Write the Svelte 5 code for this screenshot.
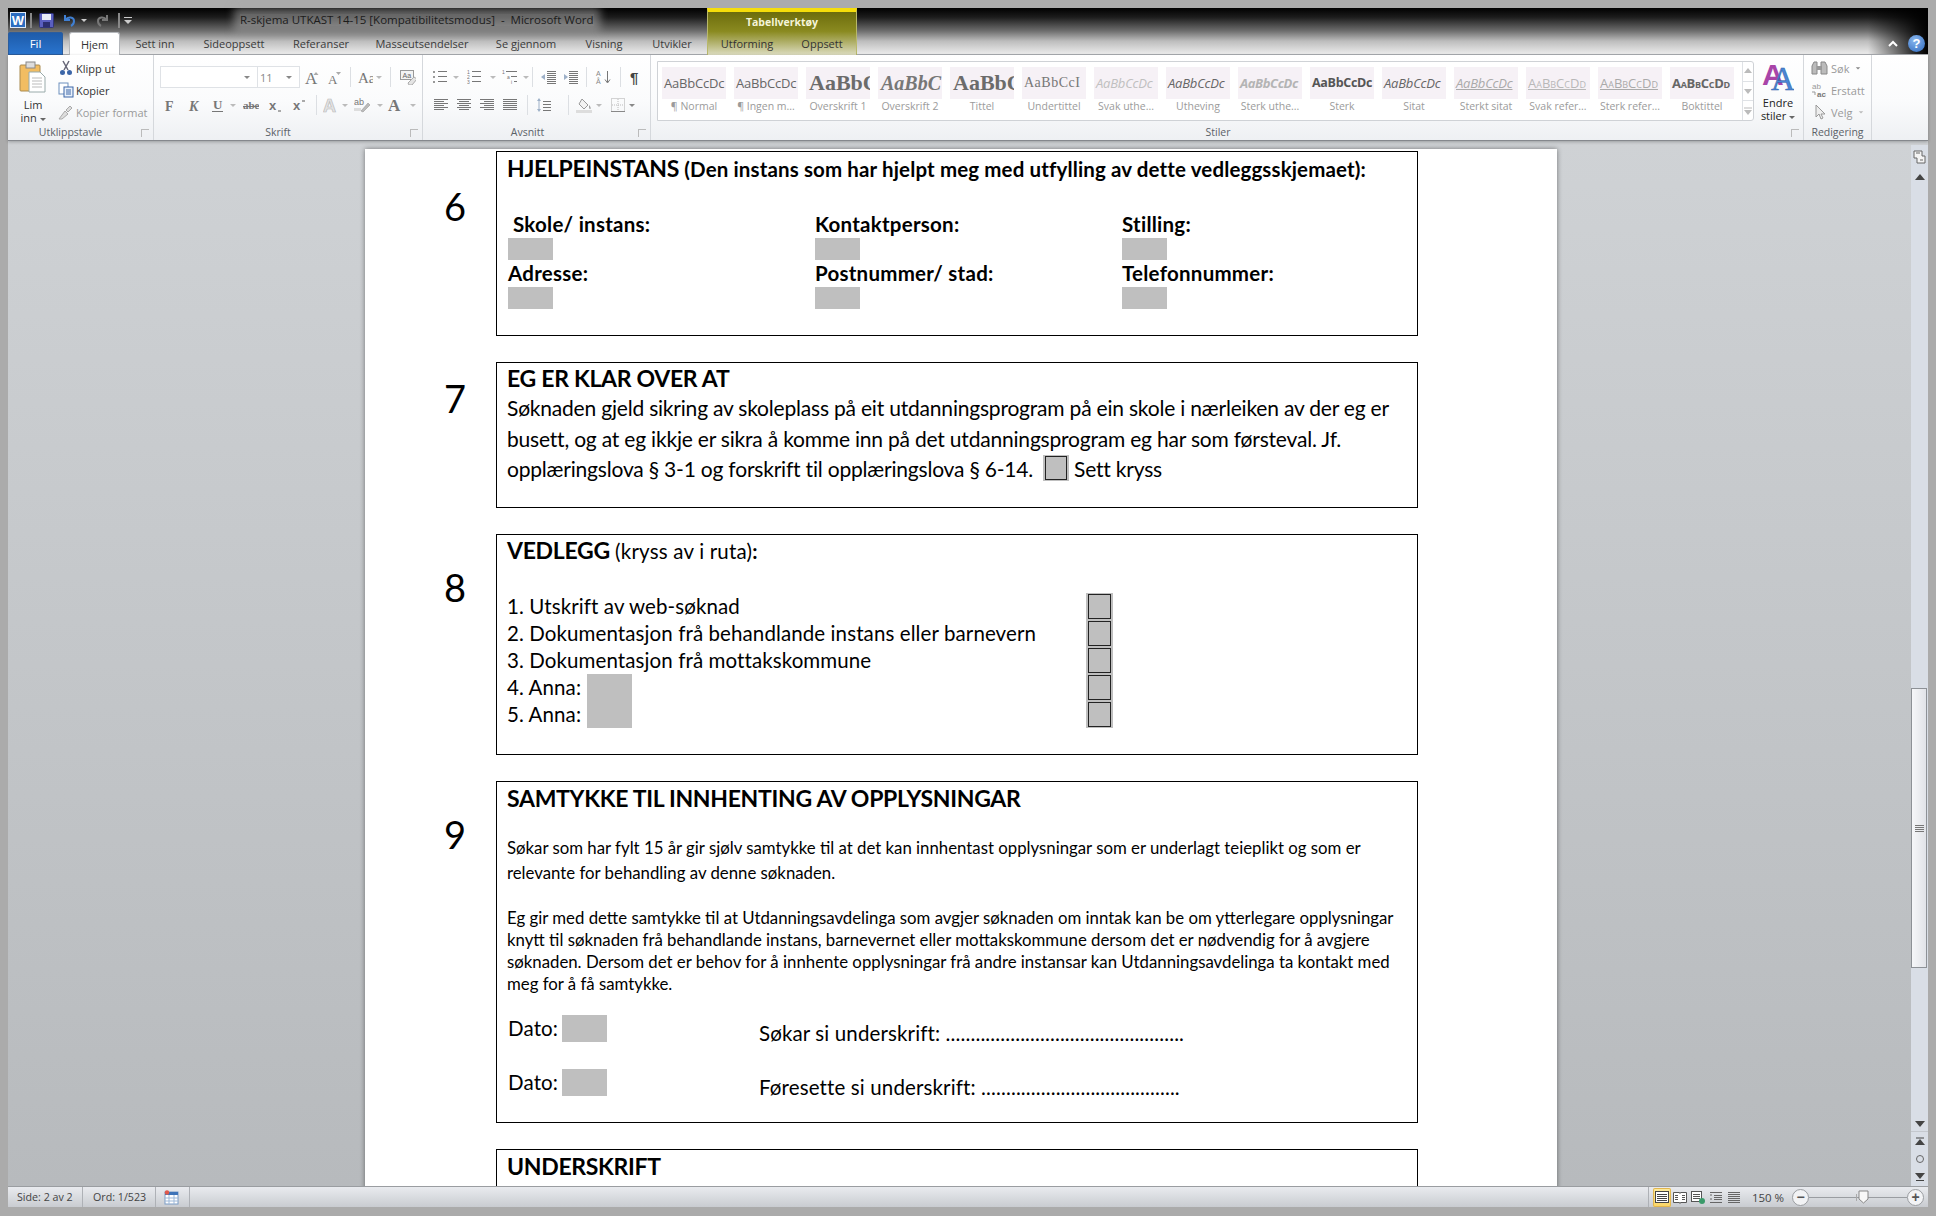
<script>
  // Word 2010 window with a form document, ribbon gallery and status bar
  const lines = (ys, x1, x2, c = '#777') =>
    ys.map((y) => `<path d="M${x1} ${y}.5H${x2}" stroke="${c}"/>`).join('');

  const icons = {
    caret: `<path d="M5 7h6l-3 3z" fill="#888"/>`,
    caretLight: `<path d="M5 7h6l-3 3z" fill="#bbb"/>`,
    grow: `<text x="1" y="15" font-family="Liberation Serif" font-size="17" fill="#777">A</text><path d="M12 3l2.5 3h-5z" fill="#aaa"/>`,
    shrink: `<text x="2" y="15" font-family="Liberation Serif" font-size="13" fill="#777">A</text><path d="M10 3h5l-2.5 3z" fill="#aaa"/>`,
    case: `<text x="1" y="14" font-family="Liberation Serif" font-size="15" fill="#777">Aa</text>`,
    clear: `<rect x="0.5" y="1.5" width="13" height="9" fill="#f3f3f3" stroke="#999"/><text x="2.5" y="9" font-family="Liberation Sans" font-size="7" fill="#666">Aa</text><path d="M8 14l6-6 3 2-5 6h-3z" fill="#e4e4e4" stroke="#aaa"/>`,
    bold: `<text x="3" y="14" font-family="Liberation Serif" font-weight="700" font-size="14" fill="#777">F</text>`,
    italic: `<text x="3" y="14" font-family="Liberation Serif" font-style="italic" font-weight="700" font-size="14" fill="#777">K</text>`,
    under: `<text x="3" y="12" font-family="Liberation Serif" font-weight="700" font-size="13" fill="#777">U</text><path d="M2 14.5h11" stroke="#777"/>`,
    strike: `<text x="0" y="12" font-family="Liberation Serif" font-weight="700" font-size="11" fill="#777">abe</text><path d="M0 9.5h18" stroke="#777"/>`,
    sub: `<text x="1" y="13" font-family="Liberation Sans" font-weight="700" font-size="13" fill="#777">x</text><path d="M10 13h3v2h-3z" fill="#aaa"/>`,
    sup: `<text x="1" y="13" font-family="Liberation Sans" font-weight="700" font-size="13" fill="#777">x</text><path d="M10 3h3v2h-3z" fill="#aaa"/>`,
    effect: `<text x="0" y="15" font-family="Liberation Sans" font-weight="700" font-size="18" fill="#e4e4e4" stroke="#bbb" stroke-width=".7">A</text>`,
    mark: `<text x="0" y="8" font-family="Liberation Sans" font-size="9" fill="#777">ab</text><path d="M7 14l7-8 2 2-7 7z" fill="#bbb" stroke="#999" stroke-width=".6"/><path d="M0 11h7v3H0z" fill="#ddd"/>`,
    colorA: `<text x="1" y="14" font-family="Liberation Serif" font-weight="700" font-size="17" fill="#777">A</text>`,
    bullets: `<g fill="#999"><rect x="1" y="2" width="2" height="2"/><rect x="1" y="7" width="2" height="2"/><rect x="1" y="12" width="2" height="2"/></g>${lines([2, 7, 12], 6, 15)}`,
    numbers: `<g font-family="Liberation Sans" font-size="5" fill="#777"><text x="0" y="5">1</text><text x="0" y="10">2</text><text x="0" y="15">3</text></g>${lines([2, 7, 12], 5, 14)}`,
    multi: `<g font-family="Liberation Sans" font-size="5" fill="#777"><text x="0" y="5">1</text><text x="5" y="10">a</text><text x="9" y="15">i</text></g>${lines([2], 4, 15)}${lines([7], 9, 15)}${lines([12], 12, 15)}`,
    outdent: `${lines([2, 4, 6, 8, 10, 12, 14], 6, 15)}<path d="M0 8l4-3v6z" fill="#9db0c8"/>`,
    indent: `${lines([2, 4, 6, 8, 10, 12, 14], 6, 15)}<path d="M5 8L1 5v6z" fill="#9db0c8"/>`,
    sort: `<g font-family="Liberation Sans" font-size="7" fill="#888"><text x="1" y="7">A</text><text x="1" y="15">Å</text></g><path d="M12.5 2v11M10 10.5l2.5 3.5 2.5-3.5" fill="none" stroke="#777"/>`,
    pilcrow: `<text x="2" y="14" font-family="Liberation Sans" font-weight="700" font-size="15" fill="#444">¶</text>`,
    left: lines([2, 6, 10], 1, 15) + lines([4, 8, 12], 1, 11),
    center: lines([2, 6, 10], 1, 15) + lines([4, 8, 12], 3, 13),
    right: lines([2, 6, 10], 1, 15) + lines([4, 8, 12], 5, 15),
    justify: lines([2, 4, 6, 8, 10, 12], 1, 15),
    spacing: `<path d="M3 1l-2 3h4zM3 15l-2-3h4z" fill="#9db0c8"/><path d="M3 4v8" stroke="#9db0c8"/>${lines([4, 7, 10, 13], 7, 15)}`,
    fill: `<path d="M6 2l6 6-4 4-5-5z" fill="#f2f2f2" stroke="#999"/><path d="M13 8c2 2 2 4 1 4s-1-2-1-4z" fill="#999"/><rect x="0" y="13" width="16" height="3" fill="#ddd"/>`,
    borders: `<rect x="1.5" y="1.5" width="13" height="13" fill="none" stroke="#aaa" stroke-dasharray="1 1"/><path d="M8 2v12M2 8h12" stroke="#bbb" stroke-dasharray="1 1"/><path d="M1 14.5h14" stroke="#888"/>`
  };

  const fontRow1 = [
    { i: 'grow', w: 23 }, { i: 'shrink', w: 22 }, { sep: 1, w: 10 },
    { i: 'case', w: 20 }, { i: 'caretLight', w: 8 }, { sep: 1, w: 14 }, { i: 'clear', w: 22 }
  ];
  const fontRow2 = [
    { i: 'bold', w: 20 }, { i: 'italic', w: 28 }, { i: 'under', w: 20 }, { i: 'caretLight', w: 10 },
    { i: 'strike', w: 26 }, { i: 'sub', w: 24 }, { i: 'sup', w: 24 }, { sep: 1, w: 8 },
    { i: 'effect', w: 22 }, { i: 'caretLight', w: 6 }, { i: 'mark', w: 28 }, { i: 'caretLight', w: 8 },
    { i: 'colorA', w: 22 }, { i: 'caretLight', w: 14 }
  ];
  const paraRow1 = [
    { i: 'bullets', w: 22 }, { i: 'caretLight', w: 10 }, { i: 'numbers', w: 28 }, { i: 'caretLight', w: 8 },
    { i: 'multi', w: 26 }, { i: 'caretLight', w: 6 }, { sep: 1, w: 6 }, { i: 'outdent', w: 28 },
    { i: 'indent', w: 16 }, { sep: 1, w: 15 }, { i: 'sort', w: 18 }, { sep: 1, w: 16 }, { i: 'pilcrow', w: 16 }
  ];
  const paraRow2 = [
    { i: 'left', w: 23 }, { i: 'center', w: 23 }, { i: 'right', w: 23 }, { i: 'justify', w: 24 }, { sep: 1, w: 10 },
    { i: 'spacing', w: 24 }, { sep: 1, w: 24 }, { i: 'fill', w: 8 }, { i: 'caretLight', w: 22 },
    { i: 'borders', w: 16 }, { i: 'caret', w: 12 }
  ];

  const tabs = [
    ['Sett inn', 70], ['Sideoppsett', 88], ['Referanser', 86], ['Masseutsendelser', 116],
    ['Se gjennom', 92], ['Visning', 64], ['Utvikler', 72]
  ];

  const styles = [
    { sample: 'AaBbCcDc', label: '¶ Normal', cls: 's-normal' },
    { sample: 'AaBbCcDc', label: '¶ Ingen m...', cls: 's-normal' },
    { sample: 'AaBbC', label: 'Overskrift 1', cls: 's-h1' },
    { sample: 'AaBbC', label: 'Overskrift 2', cls: 's-h2' },
    { sample: 'AaBbC', label: 'Tittel', cls: 's-h1' },
    { sample: 'AaBbCcI', label: 'Undertittel', cls: 's-sub' },
    { sample: 'AaBbCcDc', label: 'Svak uthe...', cls: 's-faint' },
    { sample: 'AaBbCcDc', label: 'Utheving', cls: 's-em' },
    { sample: 'AaBbCcDc', label: 'Sterk uthe...', cls: 's-faintb' },
    { sample: 'AaBbCcDc', label: 'Sterk', cls: 's-strong' },
    { sample: 'AaBbCcDc', label: 'Sitat', cls: 's-em' },
    { sample: 'AaBbCcDc', label: 'Sterkt sitat', cls: 's-quote' },
    { sample: 'AaBbCcDd', label: 'Svak refer...', cls: 's-ref' },
    { sample: 'AaBbCcDd', label: 'Sterk refer...', cls: 's-refb' },
    { sample: 'AaBbCcDd', label: 'Boktittel', cls: 's-book' }
  ];

  const fields = [
    [' Skole/ instans:', 'Kontaktperson:', 'Stilling:'],
    ['Adresse:', 'Postnummer/ stad:', 'Telefonnummer:']
  ];
  const attachments = [
    { text: '1. Utskrift av web-søknad' },
    { text: '2. Dokumentasjon frå behandlande instans eller barnevern' },
    { text: '3. Dokumentasjon frå mottakskommune' },
    { text: '4. Anna:', field: true },
    { text: '5. Anna:', field: true }
  ];
</script>

{#snippet toolRow(items)}
  <div class="tools">
    {#each items as t}
      <span class="cell" style="width:{t.w}px">
        {#if t.sep}
          <span class="vsep"></span>
        {:else}
          <svg width="16" height="16" viewBox="0 0 16 16">{@html icons[t.i]}</svg>
        {/if}
      </span>
    {/each}
  </div>
{/snippet}

<div class="window">
  <header class="head">
    <div class="titlebar">
      <div class="qat">
        <svg width="16" height="16" viewBox="0 0 16 16"><rect x=".5" y=".5" width="15" height="15" fill="#2b6cc0" stroke="#dfe9f6"/><text x="8" y="13" text-anchor="middle" font-family="Liberation Sans" font-weight="700" font-size="13" fill="#fff">W</text></svg>
        <span class="qsep"></span>
        <svg class="save" width="15" height="15" viewBox="0 0 15 15"><rect x=".5" y=".5" width="14" height="14" rx="1" fill="#5a5fc0" stroke="#30357a"/><rect x="3" y="1" width="9" height="6" fill="#e8ecf5"/><rect x="4" y="9" width="7" height="5" fill="#2c2f70"/></svg>
        <svg class="undo" width="14" height="14" viewBox="0 0 14 14"><path d="M3 2v5h5M3.500 7C6 3 12 4 12 8c0 2-1 4-3 5" fill="none" stroke="#3f7fd2" stroke-width="2"/></svg>
        <svg class="mini" width="8" height="8" viewBox="0 0 8 8"><path d="M1 3h6L4 6z" fill="#ccc"/></svg>
        <svg class="redo" width="14" height="14" viewBox="0 0 14 14"><path d="M11 2v5H6M10.500 7C8 3 2 4 2 8c0 2 1 4 3 5" fill="none" stroke="#777" stroke-width="2"/></svg>
        <span class="qsep q2"></span>
        <svg class="custom" width="8" height="10" viewBox="0 0 8 10"><path d="M0 2.500h8" stroke="#ccc"/><path d="M0 5h8L4 9z" fill="#ccc"/></svg>
      </div>
      <span class="doc-title">R-skjema UTKAST 14-15 [Kompatibilitetsmodus]  -  Microsoft Word</span>
      <div class="context">Tabellverktøy</div>
    </div>
    <nav class="tabs">
      <span class="tab-file">Fil</span>
      <span class="tab-home">Hjem</span>
      {#each tabs as [name, w]}
        <span class="tab" style="width:{w}px">{name}</span>
      {/each}
      <div class="ctx-tabs"><span>Utforming</span><span>Oppsett</span></div>
      <span class="grow"></span>
      <svg class="collapse" width="12" height="10" viewBox="0 0 12 10"><path d="M2 7l4-4 4 4" fill="none" stroke="#fff" stroke-width="2"/></svg>
      <span class="help">?</span>
    </nav>
  </header>

  <section class="ribbon">
    <div class="group g-clip">
      <div class="gbody clip-body">
        <div class="paste">
          <svg width="28" height="32" viewBox="0 0 28 32"><rect x="1" y="4" width="20" height="26" rx="1" fill="#f2bd62" stroke="#a98a4e"/><rect x="7" y="1" width="9" height="6" fill="#ddd" stroke="#888"/><path d="M10 11h11l5 5v15H10z" fill="#fff" stroke="#9aa"/><path d="M13 17h10M13 20h10M13 23h10M13 26h10" stroke="#bbb"/></svg>
          <span>Lim</span>
          <span>inn <i class="tri"></i></span>
        </div>
        <div class="clip-list">
          <span class="clip-item">
            <svg width="14" height="16" viewBox="0 0 14 16"><path d="M4 1l5 9M10 1L5 10" stroke="#667" stroke-width="1.500"/><circle cx="3.500" cy="12.500" r="2.500" fill="#3c66a8"/><circle cx="10.500" cy="12.500" r="2.500" fill="#3c66a8"/></svg>
            Klipp ut
          </span>
          <span class="clip-item">
            <svg width="16" height="16" viewBox="0 0 16 16"><rect x="1" y="1" width="9" height="11" fill="#fff" stroke="#6d8fbd"/><rect x="6" y="5" width="9" height="10" fill="#e8f0fa" stroke="#3c66a8"/><path d="M8 8h5M8 10h5M8 12h5" stroke="#3c66a8"/></svg>
            Kopier
          </span>
          <span class="clip-item off">
            <svg width="16" height="16" viewBox="0 0 16 16"><path d="M1 15l6-8 3 3-6 5zM8 6l4-4 2 2-4 4z" fill="#ddd" stroke="#aaa"/></svg>
            Kopier format
          </span>
        </div>
      </div>
      <div class="glabel pad20">Utklippstavle<i class="launch"></i></div>
    </div>

    <div class="group g-font">
      <div class="gbody stack">
        <div class="tools">
          <span class="combo fontname"><svg width="16" height="16" viewBox="0 0 16 16">{@html icons.caret}</svg></span>
          <span class="combo fontsize">11<svg width="16" height="16" viewBox="0 0 16 16">{@html icons.caret}</svg></span>
          {@render toolRow(fontRow1)}
        </div>
        {@render toolRow(fontRow2)}
      </div>
      <div class="glabel pad20">Skrift<i class="launch"></i></div>
    </div>

    <div class="group g-para">
      <div class="gbody stack">
        {@render toolRow(paraRow1)}
        {@render toolRow(paraRow2)}
      </div>
      <div class="glabel pad18">Avsnitt<i class="launch"></i></div>
    </div>

    <div class="group g-styles">
      <div class="gbody styles-body">
        <div class="gallery">
          <div class="thumbs">
            {#each styles as s}
              <div class="style">
                <div class="sample {s.cls}">{s.sample}</div>
                <div class="slabel">{s.label}</div>
              </div>
            {/each}
          </div>
          <div class="gscroll">
            <span><svg width="8" height="6" viewBox="0 0 8 6"><path d="M0 5h8L4 0z" fill="#bbb"/></svg></span>
            <span><svg width="8" height="6" viewBox="0 0 8 6"><path d="M0 1h8L4 6z" fill="#bbb"/></svg></span>
            <span><svg width="8" height="8" viewBox="0 0 8 8"><path d="M0 1h8" stroke="#bbb"/><path d="M0 3h8L4 8z" fill="#bbb"/></svg></span>
          </div>
        </div>
        <div class="change">
          <svg width="32" height="30" viewBox="0 0 32 30"><text x="0" y="24" font-family="Liberation Sans" font-weight="700" font-size="30" fill="#a844a8">A</text><text x="9" y="29" font-family="Liberation Serif" font-size="33" fill="#4a86d4" stroke="#2f62a8" stroke-width=".5">A</text></svg>
          <span>Endre</span>
          <span>stiler <i class="tri"></i></span>
        </div>
      </div>
      <div class="glabel pad18">Stiler<i class="launch"></i></div>
    </div>

    <div class="group g-edit">
      <div class="gbody edit-list">
        <span class="edit-item">
          <svg width="17" height="14" viewBox="0 0 17 14"><path d="M1 13V5l2-4h3v12zM10 13V1h4l2 4v8z" fill="#bbb" stroke="#888"/><path d="M6 5h5v4H6z" fill="#999"/></svg>
          Søk <svg width="12" height="12" viewBox="0 0 16 16">{@html icons.caret}</svg>
        </span>
        <span class="edit-item">
          <svg width="17" height="16" viewBox="0 0 17 16"><text x="1" y="7" font-family="Liberation Sans" font-size="8" fill="#999">ab</text><text x="6" y="15" font-family="Liberation Sans" font-weight="700" font-size="8" fill="#777">ac</text><path d="M1 10h3v3" fill="none" stroke="#999"/></svg>
          Erstatt
        </span>
        <span class="edit-item">
          <svg width="17" height="16" viewBox="0 0 17 16"><path d="M5 1v12l3-3 2 5 2-1-2-4h4z" fill="#eee" stroke="#999"/></svg>
          Velg <svg width="12" height="12" viewBox="0 0 16 16">{@html icons.caretLight}</svg>
        </span>
      </div>
      <div class="glabel">Redigering</div>
    </div>
  </section>

  <main class="workspace">
    <div class="canvas">
      <article class="page">
        <div class="sect">
          <div class="num n6">6</div>
          <div class="box b1">
            <div class="title t32">HJELPEINSTANS <span class="title-sub">(Den instans som har hjelpt meg med utfylling av dette vedleggsskjemaet):</span></div>
            <div class="field-grid">
              {#each fields as row}
                {#each row as label}
                  <div class="field-cell">
                    <div class="flabel" class:indent={label.startsWith(' ')}>{label.trim()}</div>
                    <div class="ff"></div>
                  </div>
                {/each}
              {/each}
            </div>
          </div>
        </div>

        <div class="sect">
          <div class="num n7">7</div>
          <div class="box b2">
            <div class="title t30">EG ER KLAR OVER AT</div>
            <div class="body-text">
              <div>Søknaden gjeld sikring av skoleplass på eit utdanningsprogram på ein skole i nærleiken av der eg er</div>
              <div>busett, og at eg ikkje er sikra å komme inn på det utdanningsprogram eg har som førsteval. Jf.</div>
              <div class="with-check">opplæringslova § 3-1 og forskrift til opplæringslova § 6-14.<span class="check big"><i></i></span>Sett kryss</div>
            </div>
          </div>
        </div>

        <div class="sect">
          <div class="num n8">8</div>
          <div class="box b3">
            <div class="title t30">VEDLEGG <span class="title-note">(kryss av i ruta)</span><span class="title-sub">:</span></div>
            <div class="attach">
              {#each attachments as a}
                <div class="attach-row">
                  <div class="attach-text">
                    <span>{a.text}</span>
                    {#if a.field}<span class="ff anna"></span>{/if}
                  </div>
                  <span class="check"><i></i></span>
                </div>
              {/each}
            </div>
          </div>
        </div>

        <div class="sect">
          <div class="num n9">9</div>
          <div class="box b4">
            <div class="title t32">SAMTYKKE TIL INNHENTING AV OPPLYSNINGAR</div>
            <div class="small p1">
              <div>Søkar som har fylt 15 år gir sjølv samtykke til at det kan innhentast opplysningar som er underlagt teieplikt og som er</div>
              <div>relevante for behandling av denne søknaden.</div>
            </div>
            <div class="small p2">
              <div>Eg gir med dette samtykke til at Utdanningsavdelinga som avgjer søknaden om inntak kan be om ytterlegare opplysningar</div>
              <div>knytt til søknaden frå behandlande instans, barnevernet eller mottakskommune dersom det er nødvendig for å avgjere</div>
              <div>søknaden. Dersom det er behov for å innhente opplysningar frå andre instansar kan Utdanningsavdelinga ta kontakt med</div>
              <div>meg for å få samtykke.</div>
            </div>
            <div class="signs">
              <div class="sign-row">
                <div class="dato">Dato:<span class="ff"></span></div>
                <div class="signature">Søkar si underskrift: ................................................</div>
              </div>
              <div class="sign-row">
                <div class="dato">Dato:<span class="ff"></span></div>
                <div class="signature">Føresette si underskrift: ........................................</div>
              </div>
            </div>
          </div>
        </div>

        <div class="sect">
          <div></div>
          <div class="box b5"><div class="title t32">UNDERSKRIFT</div></div>
        </div>
      </article>
    </div>

    <aside class="vscroll">
      <span class="sb-ruler">
        <svg width="13" height="14" viewBox="0 0 13 14"><path d="M1 1h8v5h3v7H4V8H1z" fill="#f4f4f4" stroke="#666"/><path d="M3 3h4M7 10h3" stroke="#666"/></svg>
      </span>
      <span class="sb-btn top"><svg width="10" height="6" viewBox="0 0 10 6"><path d="M0 6h10L5 0z" fill="#444"/></svg></span>
      <span class="sb-track-a"></span>
      <span class="sb-thumb"><i></i><i></i><i></i><i></i></span>
      <span class="sb-track-b"></span>
      <span class="sb-btn down"><svg width="10" height="6" viewBox="0 0 10 6"><path d="M0 0h10L5 6z" fill="#444"/></svg></span>
      <span class="sb-btn"><svg width="10" height="10" viewBox="0 0 10 10"><path d="M1 2h8" stroke="#444"/><path d="M0 9h10L5 3z" fill="#444"/></svg></span>
      <span class="sb-btn"><svg width="10" height="10" viewBox="0 0 10 10"><circle cx="5" cy="5" r="3.500" fill="none" stroke="#666"/></svg></span>
      <span class="sb-btn"><svg width="10" height="10" viewBox="0 0 10 10"><path d="M0 1h10L5 7z" fill="#444"/><path d="M1 8.500h8" stroke="#444"/></svg></span>
    </aside>
  </main>

  <footer class="status">
    <span class="st st-page">Side: 2 av 2</span>
    <span class="st st-words">Ord: 1/523</span>
    <span class="st st-lang">
      <svg width="15" height="15" viewBox="0 0 15 15"><rect x="1" y="2" width="13" height="12" fill="#fff" stroke="#7a9cc6"/><rect x="1" y="2" width="13" height="3" fill="#3f74b8"/><path d="M1 8h13M1 11h13M5 5v9M10 5v9" stroke="#9db8d8"/><circle cx="3" cy="2.500" r="2.200" fill="#e2584a"/></svg>
    </span>
    <span class="grow"></span>
    <div class="views">
      <span class="view active"><svg width="14" height="14" viewBox="0 0 14 14"><rect x=".5" y="1.500" width="13" height="11" fill="#fff" stroke="#444"/>{@html lines([4, 6, 8, 10], 2, 12, '#444')}</svg></span>
      <span class="view"><svg width="14" height="14" viewBox="0 0 14 14"><path d="M.5 2.500h6l.5 1 .5-1h6v10h-6l-.5 1-.5-1h-6z" fill="#fff" stroke="#555"/>{@html lines([5, 7, 9], 2, 5, '#555')}{@html lines([5, 7, 9], 9, 12, '#555')}</svg></span>
      <span class="view"><svg width="14" height="14" viewBox="0 0 14 14"><rect x=".5" y="1.500" width="10" height="10" fill="#fff" stroke="#555"/>{@html lines([4, 6, 8], 2, 9, '#555')}<circle cx="11" cy="11" r="3" fill="#3a9a6a"/></svg></span>
      <span class="view"><svg width="14" height="14" viewBox="0 0 14 14">{@html lines([2, 12], 1, 13, '#666')}{@html lines([5, 7, 9], 5, 13, '#666')}<path d="M1 5h2M1 9h2" stroke="#666"/></svg></span>
      <span class="view"><svg width="14" height="14" viewBox="0 0 14 14">{@html lines([2, 4, 6, 8, 10, 12], 1, 13, '#666')}</svg></span>
    </div>
    <span class="zoomval">150 %</span>
    <div class="zoomer">
      <span class="zbtn">−</span>
      <span class="zline"><i class="ztick"></i><svg class="zthumb" width="11" height="14" viewBox="0 0 11 14"><path d="M1 1h9v8l-4.500 4L1 9z" fill="#f8f8f8" stroke="#888"/></svg></span>
      <span class="zbtn">+</span>
    </div>
  </footer>
</div>

<style>
  :global(body) { margin: 0; background: #ababab; }

  .window {
    width: 1936px; height: 1216px; box-sizing: border-box;
    padding: 8px 8px 9px; background: #ababab;
    display: flex; flex-direction: column; overflow: hidden;
    font-family: "Open Sans", "Liberation Sans", sans-serif; font-size: 11px; color: #333;
  }

  /* title bar + tabs */
  .head {
    height: 47px; flex: none; box-sizing: border-box;
    border-bottom: 1px solid #a9acb0;
    background:
      linear-gradient(to left, #000 0, rgba(0,0,0,.85) 12px, rgba(0,0,0,0) 60px),
      linear-gradient(to bottom, #000 0, #1c1c1c 20%, #6e6e6e 50%, #bdbdbd 72%, #ebebeb 100%);
  }
  .titlebar { height: 24px; display: flex; align-items: center; position: relative; }
  .qat { width: 232px; padding-left: 2px; height: 24px; display: flex; align-items: center; flex: none; box-sizing: border-box; }
  .qat svg { flex: none; }
  .qsep { width: 2px; height: 15px; margin: 0 6px 0 4px; background: #888; }
  .q2 { margin: 0 4px 0 8px; }
  .save { margin-left: 1px; }
  .undo { margin-left: 8px; }
  .mini { margin-left: 4px; }
  .redo { margin-left: 8px; }
  .doc-title {
    color: #1c1c1c; font-size: 11.5px; white-space: pre; line-height: 12px;
    background: rgba(170,170,170,.55); box-shadow: 0 0 9px 6px rgba(170,170,170,.55);
  }
  .context {
    position: absolute; left: 699px; top: 0; width: 150px; height: 47px; box-sizing: border-box;
    border-top: 4px solid #f5dd0a; border-left: 1px solid #b8b86a; border-right: 1px solid #b8b86a;
    background: linear-gradient(#6c6c0c, #8a8a20 45%, #dcdcc0 100%);
    color: #f4f4d8; font-weight: 700; font-size: 10.5px; text-align: center; line-height: 20px;
  }
  .tabs { height: 23px; display: flex; align-items: stretch; position: relative; }
  .tabs span { display: flex; align-items: center; justify-content: center; }
  .tab-file {
    width: 55px; flex: none; color: #fff; font-size: 11.5px; border-radius: 3px 3px 0 0;
    background: linear-gradient(#1d5aa8, #2a75cf); box-shadow: inset 0 0 0 1px #2b5d9e;
  }
  .tab-home {
    width: 51px; flex: none; margin-left: 6px; background: #fff;
    border: 1px solid #b4b7bb; border-bottom: none; border-radius: 3px 3px 0 0; box-sizing: border-box;
    margin-bottom: -1px; z-index: 1;
  }
  .tab { flex: none; color: #3a3a3a; }
  .ctx-tabs { position: absolute; left: 699px; top: 0; width: 150px; height: 23px; display: flex; z-index: 1; }
  .ctx-tabs span { flex: none; color: #333; }
  .ctx-tabs span:first-child { width: 80px; }
  .ctx-tabs span:last-child { width: 70px; }
  .grow { flex: 1; }
  .collapse { align-self: center; margin-right: 9px; }
  .help {
    width: 17px; height: 17px; border-radius: 50%; align-self: center; margin-right: 3px;
    background: radial-gradient(circle at 40% 30%, #8ab8f0, #2d68bd);
    color: #fff; font: 700 13px "Liberation Sans", sans-serif;
  }

  /* ribbon */
  .ribbon {
    height: 86px; flex: none; display: flex; box-sizing: border-box;
    background: linear-gradient(#fff, #fafbfc 55%, #eef0f3);
    border-bottom: 1px solid #85888d; box-shadow: 0 1px 3px rgba(0,0,0,.25);
    position: relative; z-index: 2;
  }
  .group { display: flex; flex-direction: column; border-right: 1px solid #d5d8dc; box-sizing: border-box; flex: none; }
  .gbody { height: 70px; flex: none; box-sizing: border-box; }
  .glabel { height: 15px; font-size: 10.5px; color: #5b6168; text-align: center; line-height: 15px; position: relative; }
  .pad20 { padding-right: 20px; }
  .pad18 { padding-right: 18px; }
  .launch {
    position: absolute; right: 4px; top: 4px; width: 7px; height: 7px;
    border: 1px solid #bbb; border-width: 1px 0 0 1px;
  }
  .g-clip { width: 146px; }
  .g-font { width: 269px; }
  .g-para { width: 228px; }
  .g-styles { width: 1153px; }
  .g-edit { width: 68px; }

  .clip-body { display: flex; padding: 6px 0 0 7px; }
  .paste { width: 36px; display: flex; flex-direction: column; align-items: center; line-height: 13px; font-size: 11px; }
  .paste svg { margin-bottom: 5px; }
  .tri { display: inline-block; border: 3px solid transparent; border-top: 3px solid #666; border-bottom: none; vertical-align: middle; }
  .clip-list { margin-left: 7px; margin-top: -1px; display: flex; flex-direction: column; gap: 6px; }
  .clip-item { height: 16px; display: flex; align-items: center; gap: 2px; white-space: nowrap; }
  .clip-item svg { width: 16px; flex: none; }
  .off { color: #9a9a9a; }

  .stack { padding: 11px 0 0 6px; display: flex; flex-direction: column; gap: 6px; }
  .tools { display: flex; height: 22px; align-items: stretch; flex: none; }
  .cell { display: flex; align-items: center; justify-content: center; flex: none; }
  .cell svg { flex: none; }
  .vsep { width: 1px; height: 20px; background: #dcdfe3; }
  .combo {
    box-sizing: border-box; height: 22px; background: #fff; border: 1px solid #dfe2e6; color: #888;
    display: flex; align-items: center; justify-content: flex-end; padding-right: 2px; flex: none; font-size: 11px;
  }
  .fontname { width: 98px; }
  .fontsize { width: 43px; margin-left: -1px; justify-content: space-between; padding-left: 2px; }

  .styles-body { display: flex; padding: 6px 0 0 6px; align-items: flex-start; }
  .gallery { width: 1097px; height: 60px; box-sizing: border-box; border: 1px solid #cfd2d6; background: #fff; display: flex; border-radius: 0 3px 3px 0; }
  .thumbs { width: 1084px; display: flex; gap: 8px; padding: 5px 0 0 4px; box-sizing: border-box; flex: none; }
  .style { width: 64px; flex: none; }
  .sample {
    height: 32px; background: #f6f1f6; line-height: 32px; overflow: hidden; white-space: nowrap;
    padding-left: 2px; box-sizing: border-box; color: #666; font-size: 13px;
  }
  .slabel { text-align: center; color: #9b9b9b; font-size: 10.5px; line-height: 14px; white-space: nowrap; }
  .s-normal { font-family: "Open Sans", sans-serif; letter-spacing: -.2px; }
  .s-h1 { font: 700 22px/32px "Liberation Serif", serif; padding-left: 3px; color: #6b6b6b; }
  .s-h2 { font: italic 700 20px/32px "Liberation Serif", serif; padding-left: 3px; color: #777; }
  .s-sub { font: 14px/32px "Liberation Serif", serif; color: #777; letter-spacing: .5px; }
  .s-faint { font-style: italic; color: #c0c0c0; letter-spacing: -.2px; }
  .s-em { font-style: italic; letter-spacing: -.2px; }
  .s-faintb { font-style: italic; font-weight: 700; color: #b4b4b4; letter-spacing: -.4px; }
  .s-strong { font-weight: 700; color: #555; font-size: 12.5px; letter-spacing: -.3px; }
  .s-quote { font-style: italic; color: #aaa; text-decoration: underline; letter-spacing: -.2px; }
  .s-ref { font-variant: small-caps; color: #b8b8b8; text-decoration: underline; }
  .s-refb { font-variant: small-caps; color: #aaa; text-decoration: underline; }
  .s-book { font-variant: small-caps; color: #666; font-weight: 700; letter-spacing: -.3px; }
  .gscroll { flex: 1; display: flex; flex-direction: column; border-left: 1px solid #dfe2e6; }
  .gscroll span { flex: 1; display: flex; align-items: center; justify-content: center; border-bottom: 1px solid #dfe2e6; }
  .gscroll span:last-child { border-bottom: none; }
  .change { width: 48px; margin-top: -1px; display: flex; flex-direction: column; align-items: center; line-height: 13px; color: #222; }
  .change svg { margin: 1px 0 5px; flex: none; }
  .edit-list { padding: 5px 0 0 7px; display: flex; flex-direction: column; gap: 6px; }
  .edit-item { height: 16px; display: flex; align-items: center; gap: 3px; color: #9a9a9a; white-space: nowrap; }

  /* document area */
  .workspace { flex: 1; min-height: 0; display: flex; background: linear-gradient(#cfd2d5, #b7babd); }
  .canvas { flex: 1; min-width: 0; overflow: hidden; padding: 8px 0 0 357px; box-sizing: border-box; }
  .page {
    width: 1192px; height: 1400px; background: #fff; box-shadow: 0 0 5px rgba(0,0,0,.45);
    padding-top: 2px; box-sizing: border-box;
    font-family: Lato, "Open Sans", sans-serif; color: #000;
    display: flex; flex-direction: column; gap: 26px;
  }
  .sect { display: grid; grid-template-columns: 131px 922px; }
  .num { font-size: 38px; line-height: 44px; padding-left: 79px; }
  .n6 { padding-top: 33px; }
  .n7 { padding-top: 14px; }
  .n8 { padding-top: 31px; }
  .n9 { padding-top: 31px; }
  .box { border: 1px solid #000; box-sizing: border-box; padding-left: 10px; }
  .b1 { height: 185px; }
  .b2 { height: 146px; }
  .b3 { height: 221px; }
  .b4 { height: 342px; }
  .b5 { height: 100px; }
  .title { font-weight: 700; font-size: 23px; letter-spacing: -.3px; white-space: nowrap; }
  .t30 { line-height: 30px; }
  .t32 { line-height: 32px; }
  .title-sub { font-size: 20.5px; letter-spacing: .13px; }
  .title-note { font-weight: 400; font-size: 20.5px; letter-spacing: .2px; }

  .field-grid { margin-top: 27px; padding-left: 1px; display: grid; grid-template-columns: repeat(3, 307px); row-gap: 1px; }
  .flabel { height: 26px; line-height: 24px; font-size: 20.5px; font-weight: 700; letter-spacing: .25px; white-space: nowrap; }
  .indent { padding-left: 5px; }
  .ff { display: block; width: 45px; height: 22px; background: #bfbfbf; flex: none; }

  .body-text { font-size: 21px; line-height: 30.5px; letter-spacing: -.2px; white-space: nowrap; }
  .check {
    width: 27px; height: 27px; background: #bfbfbf; box-sizing: border-box; padding: 1px 2px;
    display: inline-flex; flex: none;
  }
  .check i { flex: 1; border: 1px solid #222; }
  .big { vertical-align: -3px; margin: -6px 5px -6px 10px; width: 26px; height: 26px; }

  .attach { margin-top: 27px; }
  .attach-row { display: flex; height: 27px; }
  .attach-text { width: 579px; flex: none; display: flex; font-size: 20.5px; line-height: 27px; letter-spacing: .1px; white-space: nowrap; gap: 6px; }
  .anna { height: 27px; }

  .small { font-size: 16.8px; letter-spacing: 0; white-space: nowrap; }
  .p1 { margin-top: 21px; line-height: 25px; }
  .p2 { margin-top: 22px; line-height: 22px; }
  .signs { margin-top: 20px; display: flex; flex-direction: column; gap: 27px; }
  .sign-row { height: 27px; display: flex; font-size: 20.5px; line-height: 27px; letter-spacing: .13px; white-space: nowrap; }
  .dato { width: 252px; flex: none; display: flex; gap: 4px; padding-left: 1px; box-sizing: border-box; }
  .dato .ff { height: 27px; }
  .signature { padding-top: 5px; }

  /* scrollbar */
  .vscroll { width: 17px; flex: none; margin-top: 4px; display: flex; flex-direction: column; background: #d9dee6; }
  .vscroll span { display: flex; align-items: center; justify-content: center; flex: none; }
  .sb-ruler { height: 23px; }
  .sb-btn { height: 18px; }
  .sb-btn.down { height: 18px; padding-top: 3px; box-sizing: border-box; border-bottom: 1px solid #c4c8ce; }
  .sb-track-a { height: 502px; }
  .sb-track-b { flex: 1 !important; }
  .sb-thumb {
    height: 280px; box-sizing: border-box; width: 16px; border: 1px solid #8d9196;
    background: linear-gradient(to right, #f6f7f9, #e1e3e8);
    flex-direction: column; gap: 1px;
  }
  .sb-thumb i { width: 9px; height: 1px; background: #777; }

  /* status bar */
  .status {
    height: 21px; flex: none; display: flex; align-items: stretch; box-sizing: border-box;
    border-top: 1px solid #9a9da1; background: linear-gradient(#e9ebef, #c9ccd1);
    font-size: 10.7px; color: #444; position: relative;
  }
  .st { display: flex; align-items: center; border-right: 1px solid #aeb1b6; box-sizing: border-box; flex: none; }
  .st-page { width: 75px; padding-left: 9px; }
  .st-words { width: 73px; padding-left: 10px; }
  .st-lang { width: 34px; padding-left: 8px; }
  .views { display: flex; align-items: center; border-left: 1px solid #aeb1b6; padding-left: 4px; flex: none; }
  .view { width: 18px; height: 19px; display: flex; align-items: center; justify-content: center; }
  .active { background: linear-gradient(#fdeca0, #fbd564); box-shadow: inset 0 0 0 1px #e2b64e; border-radius: 2px; }
  .zoomval { width: 52px; text-align: center; align-self: center; font-size: 11.5px; flex: none; margin-left: -1px; margin-right: -2px; }
  .zoomer { display: flex; align-items: center; width: 132px; margin-right: 4px; flex: none; }
  .zbtn {
    width: 15px; height: 15px; border-radius: 50%; border: 1px solid #9a9da1; background: #f2f3f5; flex: none;
    display: flex; align-items: center; justify-content: center; font: 700 14px/1 "Liberation Sans", sans-serif; color: #555;
  }
  .zline { flex: 1; height: 1px; background: #9a9da1; position: relative; }
  .ztick { position: absolute; left: 47px; top: -3px; width: 1px; height: 7px; background: #aaa; }
  .zthumb { position: absolute; left: 49px; top: -7px; }
</style>
